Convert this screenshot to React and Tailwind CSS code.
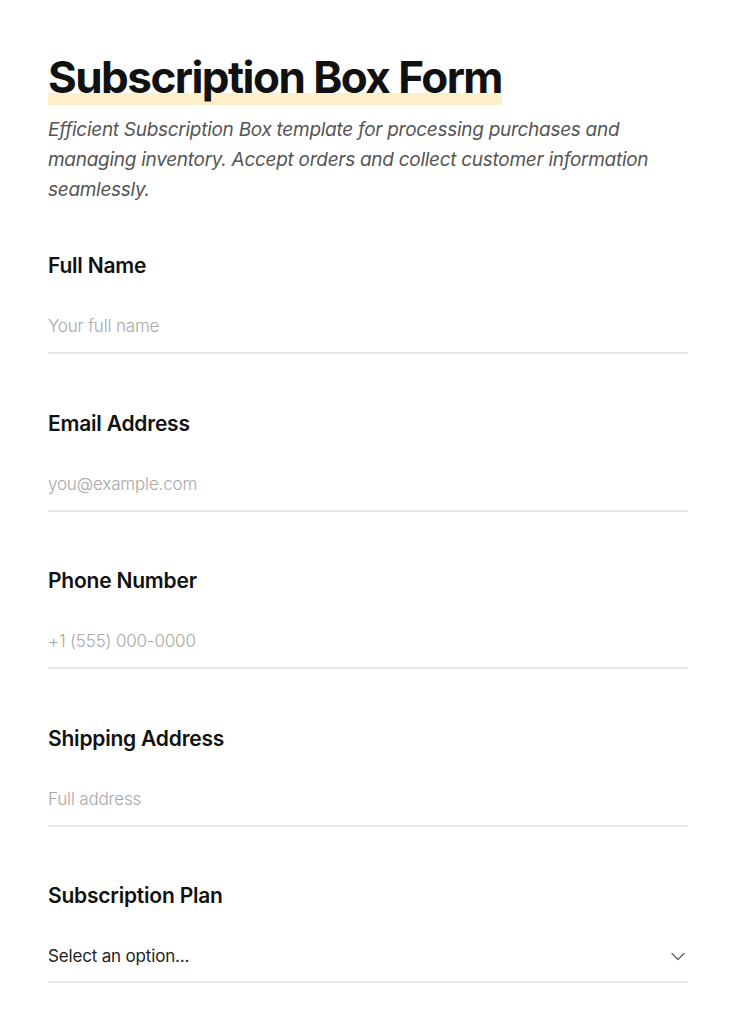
import React from "react";

const fields = [
  { label: "Full Name", placeholder: "Your full name", type: "text" },
  { label: "Email Address", placeholder: "you@example.com", type: "email" },
  { label: "Phone Number", placeholder: "+1 (555) 000-0000", type: "tel" },
  { label: "Shipping Address", placeholder: "Full address", type: "text" },
];

const App = () => {
  return (
    <div className="min-h-screen bg-white font-['Inter',sans-serif] text-[#111]">
      <main className="mx-auto max-w-[736px] px-12 pt-[51px] pb-12">
        <h1 className="flex">
          <span className="inline-block pb-[2px] text-[44px] leading-[52px] font-bold tracking-[-0.035em] bg-[linear-gradient(to_bottom,transparent_calc(100%-12px),#fdf0c8_calc(100%-12px))]">
            Subscription Box Form
          </span>
        </h1>
        <p className="mt-[10px] text-[19px] leading-[30px] italic text-[#555] tracking-[-0.015em]">
          Efficient Subscription Box template for processing purchases and
          <br />
          managing inventory. Accept orders and collect customer information
          <br />
          seamlessly.
        </p>

        <form className="mt-[47px] flex flex-col gap-[55.5px]">
          {fields.map((f) => (
            <div key={f.label} className="flex flex-col">
              <label className="text-[21px] leading-[28px] font-semibold tracking-[-0.01em]">
                {f.label}
              </label>
              <input
                type={f.type}
                placeholder={f.placeholder}
                className="mt-5 py-3 text-[17px] leading-[28px] font-light border-b-2 border-[#e6e6e6] outline-none placeholder:text-[#a8a8a8] tracking-[-0.01em]"
              />
            </div>
          ))}

          <div className="flex flex-col">
            <label className="text-[21px] leading-[28px] font-semibold tracking-[-0.01em]">
              Subscription Plan
            </label>
            <div className="mt-5 flex items-center justify-between pt-3 pb-[11px] border-b-2 border-[#e6e6e6]">
              <span className="text-[17px] leading-[28px] text-[#222] tracking-[-0.01em]">
                Select an option...
              </span>
              <svg
                width="16"
                height="16"
                viewBox="0 0 16 16"
                fill="none"
                stroke="#666"
                strokeWidth="1.4"
                strokeLinecap="round"
                strokeLinejoin="round"
                className="mr-[2px]"
              >
                <path d="M2 5.5l6 6 6-6" />
              </svg>
            </div>
          </div>
        </form>
      </main>
    </div>
  );
};

export default App;
